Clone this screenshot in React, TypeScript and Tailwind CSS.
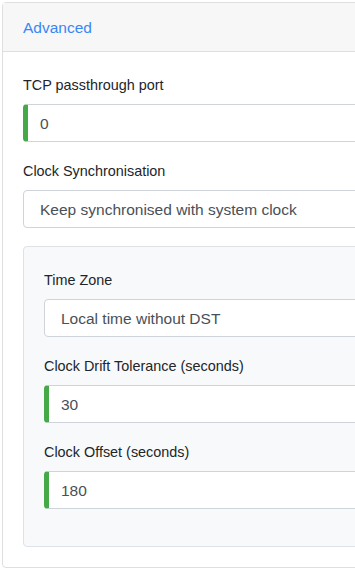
import React from "react"

const font = { fontFamily: '"Liberation Sans", Arial, sans-serif' }

function Label({ children }: { children: React.ReactNode }) {
  return <div className="mb-2 text-[14.4px] leading-[22px] text-[#212529]">{children}</div>
}

function NumberInput({ value }: { value: string }) {
  return (
    <div className="flex h-[38px] items-center rounded-[4px] border border-[#ced4da] border-l-[5px] border-l-[#45a948] bg-white pt-[2px] pl-3 text-[15.5px] text-[#495057]">
      {value}
    </div>
  )
}

function Select({ value }: { value: string }) {
  return (
    <div className="flex h-[38px] items-center rounded-[4px] border border-[#ced4da] bg-white pt-[2px] pl-4 text-[15.5px] text-[#495057]">
      {value}
    </div>
  )
}

function Field({ label, children }: { label: string; children: React.ReactNode }) {
  return (
    <div className="mb-[18px]">
      <Label>{label}</Label>
      {children}
    </div>
  )
}

export default function App() {
  return (
    <div className="h-[573px] w-[355px] overflow-hidden bg-white p-[2px]" style={font}>
      <div className="w-[480px] rounded-[4px] border border-[#dfdfdf] bg-white">
        <div className="flex h-[49px] items-center border-b border-[#dfdfdf] bg-[#f7f7f7] px-5 pt-[2px] text-[15.5px] text-[#3a87f4]">
          Advanced
        </div>
        <div className="px-5 pt-[22px] pb-[20px]">
          <Field label="TCP passthrough port">
            <NumberInput value="0" />
          </Field>
          <Field label="Clock Synchronisation">
            <Select value="Keep synchronised with system clock" />
          </Field>
          <div className="rounded-[4px] border border-[#dee2e6] bg-[#f8f9fa] px-5 pt-[22px] pb-[19px]">
            <Field label="Time Zone">
              <Select value="Local time without DST" />
            </Field>
            <Field label="Clock Drift Tolerance (seconds)">
              <NumberInput value="30" />
            </Field>
            <Field label="Clock Offset (seconds)">
              <NumberInput value="180" />
            </Field>
          </div>
        </div>
      </div>
    </div>
  )
}
